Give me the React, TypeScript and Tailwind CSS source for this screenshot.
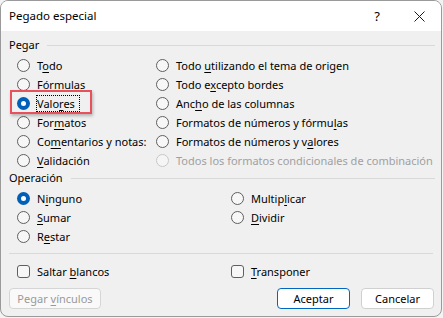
import React from 'react'

const Radio = ({ checked, disabled }: { checked?: boolean; disabled?: boolean }) => {
  if (checked) {
    return (
      <span className="flex h-[13px] w-[13px] shrink-0 items-center justify-center rounded-full bg-[#005fb8]">
        <span className="h-[5px] w-[5px] rounded-full bg-white" />
      </span>
    )
  }
  return (
    <span
      className={
        disabled
          ? 'h-[13px] w-[13px] shrink-0 rounded-full border border-[#c8c8c8] bg-[#f5f5f5]'
          : 'h-[13px] w-[13px] shrink-0 rounded-full border border-[#5f5f5f] bg-[#f7f7f7]'
      }
    />
  )
}

const Check = () => (
  <span className="h-[13px] w-[13px] shrink-0 rounded-[3px] border border-[#5f5f5f] bg-[#f7f7f7]" />
)

type Opt = { pre: string; key: string; post: string; checked?: boolean; disabled?: boolean }

const Option = ({ o }: { o: Opt }) => (
  <div className="flex h-[19px] items-center gap-[7px] whitespace-nowrap">
    <Radio checked={o.checked} disabled={o.disabled} />
    <span className={o.disabled ? 'text-[#a0a0a0]' : 'text-black'}>
      {o.pre}
      {o.key && <u className="underline-offset-2">{o.key}</u>}
      {o.post}
    </span>
  </div>
)

const pegarLeft: Opt[] = [
  { pre: 'T', key: 'o', post: 'do' },
  { pre: '', key: 'F', post: 'órmulas' },
  { pre: 'Valo', key: 'r', post: 'es', checked: true },
  { pre: 'For', key: 'm', post: 'atos' },
  { pre: 'Co', key: 'm', post: 'entarios y notas:' },
  { pre: '', key: 'V', post: 'alidación' }
]

const pegarRight: Opt[] = [
  { pre: 'Todo ', key: 'u', post: 'tilizando el tema de origen' },
  { pre: 'Todo e', key: 'x', post: 'cepto bordes' },
  { pre: 'Anc', key: 'h', post: 'o de las columnas' },
  { pre: 'Formatos de números y fórmu', key: 'l', post: 'as' },
  { pre: 'Formatos de números y v', key: 'a', post: 'lores' },
  { pre: 'Todos los formatos condicionales de combinación', key: '', post: '', disabled: true }
]

const opLeft: Opt[] = [
  { pre: 'N', key: 'i', post: 'nguno', checked: true },
  { pre: '', key: 'S', post: 'umar' },
  { pre: 'R', key: 'e', post: 'star' }
]

const opRight: Opt[] = [
  { pre: 'Multip', key: 'l', post: 'icar' },
  { pre: '', key: 'D', post: 'ividir' }
]

const GroupLabel = ({ text }: { text: string }) => (
  <div className="flex h-[16px] items-center gap-[8px] pl-[8px] pr-[6px]">
    <span>{text}</span>
    <span className="h-px flex-1 bg-[#d9d9d9]" />
  </div>
)

export default function App() {
  return (
    <div className="h-[318px] w-[443px] bg-[#f3f3f3] font-['Noto_Sans',sans-serif] text-[11px] leading-[16px] text-black">
      <div className="flex h-[317px] w-[442px] flex-col overflow-hidden rounded-[8px] border border-[#9a9a9a] bg-[#f0f0f0]">
        <div className="flex h-[30px] shrink-0 items-center bg-white pl-[8px]">
          <span className="flex-1 text-[11.5px]">Pegado especial</span>
          <span className="w-[40px] text-center text-[13px]">?</span>
          <span className="flex w-[44px] justify-center">
            <svg width="11" height="11" viewBox="0 0 11 11">
              <path d="M0.5 0.5 L10.5 10.5 M10.5 0.5 L0.5 10.5" stroke="#1a1a1a" strokeWidth="1" />
            </svg>
          </span>
        </div>

        <div className="flex flex-col pt-[6px]">
          <GroupLabel text="Pegar" />
          <div className="mt-[3px] flex pl-[16px]">
            <div className="flex w-[139px] shrink-0 flex-col">
              {pegarLeft.map((o, i) =>
                o.checked ? (
                  <div key={i} className="relative">
                    <Option o={o} />
                    <span className="pointer-events-none absolute left-[-7px] top-[-4px] h-[24px] w-[82px] border-2 border-[#e8505b] shadow-[1px_2px_3px_rgba(0,0,0,0.25)]" />
                    <span className="pointer-events-none absolute left-[19px] top-[1px] h-[17px] w-[44px] border border-dotted border-black" />
                  </div>
                ) : (
                  <Option key={i} o={o} />
                )
              )}
            </div>
            <div className="flex flex-col">
              {pegarRight.map((o, i) => (
                <Option key={i} o={o} />
              ))}
            </div>
          </div>

          <GroupLabel text="Operación" />
          <div className="mt-[3px] flex pl-[16px]">
            <div className="flex w-[214px] shrink-0 flex-col">
              {opLeft.map((o, i) => (
                <Option key={i} o={o} />
              ))}
            </div>
            <div className="flex flex-col">
              {opRight.map((o, i) => (
                <Option key={i} o={o} />
              ))}
            </div>
          </div>

          <div className="mx-[8px] mt-[7px] h-px bg-[#d9d9d9]" />

          <div className="mt-[8px] flex pl-[16px]">
            <div className="flex h-[19px] w-[214px] shrink-0 items-center gap-[7px]">
              <Check />
              <span>
                Saltar <u className="underline-offset-2">b</u>lancos
              </span>
            </div>
            <div className="flex h-[19px] items-center gap-[7px]">
              <Check />
              <span>
                <u className="underline-offset-2">T</u>ransponer
              </span>
            </div>
          </div>

          <div className="mt-[7px] flex items-center pl-[8px] pr-[7px]">
            <button className="h-[21px] w-[92px] rounded-[4px] border border-[#d5d5d5] bg-[#f9f9f9] text-[#9a9a9a]">
              Pegar <u className="underline-offset-2">v</u>ínculos
            </button>
            <div className="flex-1" />
            <button className="h-[21px] w-[73px] rounded-[4px] border border-[#0067c0] bg-white text-black">
              Aceptar
            </button>
            <button className="ml-[11px] h-[21px] w-[73px] rounded-[4px] border border-[#d0d0d0] bg-white text-black">
              Cancelar
            </button>
          </div>
        </div>
      </div>
    </div>
  )
}
